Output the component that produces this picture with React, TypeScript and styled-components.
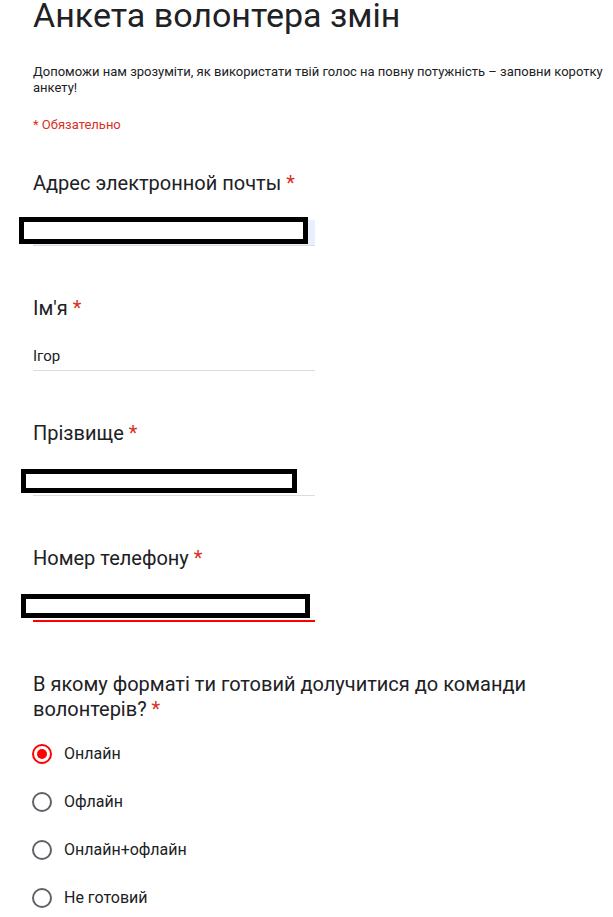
import React from "react";
import styled, { createGlobalStyle } from "styled-components";

const GlobalStyle = createGlobalStyle`
  html, body {
    margin: 0;
    padding: 0;
    background: #ffffff;
  }
  body {
    font-family: Roboto, "Noto Sans", Arial, sans-serif;
    color: #202124;
  }
  * { box-sizing: border-box; }
`;

const Page = styled.main`
  padding: 0 8px 0 33px;
`;

const Title = styled.h1`
  margin: 0;
  font-size: 34px;
  line-height: 30px;
  font-weight: 400;
  color: #202124;
`;

const Description = styled.p`
  margin: 33.5px 0 0;
  font-size: 13px;
  line-height: 16px;
  color: #202124;
`;

const RequiredNote = styled.p`
  margin: 21.5px 0 0;
  font-size: 13px;
  line-height: 16px;
  color: #d93025;
`;

const Form = styled.form`
  margin-top: 38px;
  display: flex;
  flex-direction: column;
  gap: 50.5px;
`;

const Question = styled.section`
  display: flex;
  flex-direction: column;
`;

const Label = styled.div`
  font-size: 20px;
  line-height: 25px;
  font-weight: 400;
  color: #202124;
  max-width: 560px;
`;

const Star = styled.span`
  color: #d93025;
`;

const InputWrap = styled.div`
  position: relative;
  margin-top: 23.5px;
  width: 282px;
`;

const TextInput = styled.input<{ $autofill?: boolean; $error?: boolean }>`
  display: block;
  width: 100%;
  height: ${(p) => (p.$error ? 27 : 26)}px;
  margin: 0;
  padding: 0 0 2px;
  border: none;
  border-bottom: ${(p) => (p.$error ? "2px solid #ff0000" : "1px solid #dadce0")};
  background: ${(p) => (p.$autofill ? "#e8f0fe" : "transparent")};
  font-family: Roboto, "Noto Sans", Arial, sans-serif;
  font-size: 15px;
  color: #202124;
  outline: none;
`;

const Redaction = styled.div<{ $left: number; $top: number; $width: number; $height: number }>`
  position: absolute;
  left: ${(p) => p.$left}px;
  top: ${(p) => p.$top}px;
  width: ${(p) => p.$width}px;
  height: ${(p) => p.$height}px;
  border: 5px solid #000000;
  background: #ffffff;
`;

const RadioList = styled.div`
  margin-top: 7.5px;
  display: flex;
  flex-direction: column;
`;

const RadioRow = styled.label`
  display: flex;
  align-items: center;
  gap: 12px;
  height: 48px;
  font-size: 16px;
  color: #202124;
  cursor: pointer;
`;

const RadioCircle = styled.span<{ $checked?: boolean }>`
  width: 20px;
  height: 20px;
  margin-left: -1px;
  border-radius: 50%;
  border: 2px solid ${(p) => (p.$checked ? "#ff0000" : "#5f6368")};
  display: flex;
  align-items: center;
  justify-content: center;
  flex-shrink: 0;
  &::after {
    content: "";
    width: 10px;
    height: 10px;
    border-radius: 50%;
    background: ${(p) => (p.$checked ? "#ff0000" : "transparent")};
  }
`;

type Box = { left: number; top: number; width: number; height: number };

const TextQuestion: React.FC<{
  label: string;
  value?: string;
  autofill?: boolean;
  error?: boolean;
  box?: Box;
}> = ({ label, value, autofill, error, box }) => (
  <Question>
    <Label>
      {label} <Star>*</Star>
    </Label>
    <InputWrap>
      <TextInput readOnly value={value ?? ""} $autofill={autofill} $error={error} />
      {box && <Redaction $left={box.left} $top={box.top} $width={box.width} $height={box.height} />}
    </InputWrap>
  </Question>
);

const options = ["Онлайн", "Офлайн", "Онлайн+офлайн", "Не готовий"];

export default function App() {
  return (
    <>
      <GlobalStyle />
      <Page>
        <Title>Анкета волонтера змін</Title>
        <Description>
          Допоможи нам зрозуміти, як використати твій голос на повну потужність – заповни коротку анкету!
        </Description>
        <RequiredNote>* Обязательно</RequiredNote>
        <Form>
          <TextQuestion
            label="Адрес электронной почты"
            autofill
            box={{ left: -14, top: -3, width: 289, height: 27 }}
          />
          <TextQuestion label="Ім'я" value="Ігор" />
          <TextQuestion label="Прізвище" box={{ left: -12, top: -1, width: 276, height: 24 }} />
          <TextQuestion
            label="Номер телефону"
            error
            box={{ left: -12, top: -1, width: 289, height: 24 }}
          />
          <Question>
            <Label>
              В якому форматі ти готовий долучитися до команди волонтерів? <Star>*</Star>
            </Label>
            <RadioList>
              {options.map((o, i) => (
                <RadioRow key={o}>
                  <RadioCircle $checked={i === 0} />
                  {o}
                </RadioRow>
              ))}
            </RadioList>
          </Question>
        </Form>
      </Page>
    </>
  );
}
